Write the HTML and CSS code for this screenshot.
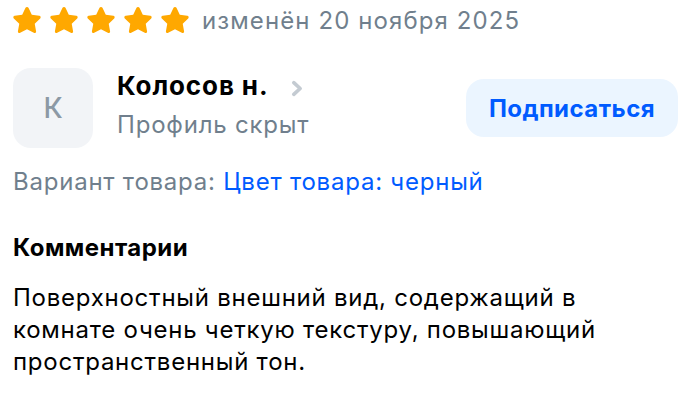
FILE: index.html
```html
<!DOCTYPE html>
<html lang="ru">

<head>
    <meta charset="UTF-8">
    <meta name="viewport" content="width=device-width, initial-scale=1.0">
    <title>Отзыв</title>
    <link rel="stylesheet" href="styles.css">
</head>

<body>
    <div class="review">
        <div class="rating-row">
            <div class="stars">
                <svg class="star" viewBox="0 0 24 24"><path d="M12 2.2c.5 0 .9.3 1.1.7l2.5 5.1 5.6.8c1 .1 1.4 1.3.7 2l-4.1 4 1 5.6c.2 1-.8 1.7-1.7 1.2L12 19l-5.1 2.6c-.9.5-1.9-.3-1.7-1.2l1-5.6-4.1-4c-.7-.7-.3-1.9.7-2l5.6-.8 2.5-5.1c.2-.4.6-.7 1.1-.7z"/></svg>
                <svg class="star" viewBox="0 0 24 24"><path d="M12 2.2c.5 0 .9.3 1.1.7l2.5 5.1 5.6.8c1 .1 1.4 1.3.7 2l-4.1 4 1 5.6c.2 1-.8 1.7-1.7 1.2L12 19l-5.1 2.6c-.9.5-1.9-.3-1.7-1.2l1-5.6-4.1-4c-.7-.7-.3-1.9.7-2l5.6-.8 2.5-5.1c.2-.4.6-.7 1.1-.7z"/></svg>
                <svg class="star" viewBox="0 0 24 24"><path d="M12 2.2c.5 0 .9.3 1.1.7l2.5 5.1 5.6.8c1 .1 1.4 1.3.7 2l-4.1 4 1 5.6c.2 1-.8 1.7-1.7 1.2L12 19l-5.1 2.6c-.9.5-1.9-.3-1.7-1.2l1-5.6-4.1-4c-.7-.7-.3-1.9.7-2l5.6-.8 2.5-5.1c.2-.4.6-.7 1.1-.7z"/></svg>
                <svg class="star" viewBox="0 0 24 24"><path d="M12 2.2c.5 0 .9.3 1.1.7l2.5 5.1 5.6.8c1 .1 1.4 1.3.7 2l-4.1 4 1 5.6c.2 1-.8 1.7-1.7 1.2L12 19l-5.1 2.6c-.9.5-1.9-.3-1.7-1.2l1-5.6-4.1-4c-.7-.7-.3-1.9.7-2l5.6-.8 2.5-5.1c.2-.4.6-.7 1.1-.7z"/></svg>
                <svg class="star" viewBox="0 0 24 24"><path d="M12 2.2c.5 0 .9.3 1.1.7l2.5 5.1 5.6.8c1 .1 1.4 1.3.7 2l-4.1 4 1 5.6c.2 1-.8 1.7-1.7 1.2L12 19l-5.1 2.6c-.9.5-1.9-.3-1.7-1.2l1-5.6-4.1-4c-.7-.7-.3-1.9.7-2l5.6-.8 2.5-5.1c.2-.4.6-.7 1.1-.7z"/></svg>
            </div>
            <span class="date">изменён 20 ноября 2025</span>
        </div>

        <div class="author-row">
            <div class="avatar">К</div>
            <div class="author-info">
                <div class="author-name">
                    Колосов н.
                    <svg class="chevron" viewBox="0 0 12 16"><path d="M2.5 2.5l6 5.5-6 5.5" fill="none" stroke="currentColor" stroke-width="3.4" stroke-linecap="round" stroke-linejoin="round"/></svg>
                </div>
                <div class="author-note">Профиль скрыт</div>
            </div>
            <button class="subscribe">Подписаться</button>
        </div>

        <div class="variant">Вариант товара: <span class="variant-value">Цвет товара: черный</span></div>

        <h3 class="section-title">Комментарии</h3>
        <p class="comment">Поверхностный внешний вид, содержащий в комнате очень четкую текстуру, повышающий пространственный тон.</p>
    </div>
</body>

</html>
```

FILE: styles.css
```css
body {
    margin: 0;
    font-family: Inter, "Noto Sans", sans-serif;
    background-color: #fff;
    color: #001a34;
}

.review {
    padding: 4px 22px 0 13px;
}

.rating-row {
    display: flex;
    align-items: center;
    height: 32px;
}

.stars {
    display: flex;
    gap: 5px;
    margin-left: -2px;
    margin-right: 11px;
}

.star {
    width: 32px;
    height: 32px;
    fill: #ffa800;
}

.date {
    font-size: 24px;
    letter-spacing: 1.1px;
    color: #707f8d;
}

.author-row {
    display: flex;
    align-items: flex-start;
    margin-top: 32px;
}

.avatar {
    width: 80px;
    height: 80px;
    border-radius: 18px;
    background-color: #f2f4f7;
    color: #8c99a5;
    font-size: 28px;
    font-weight: 500;
    display: flex;
    align-items: center;
    justify-content: center;
    flex-shrink: 0;
}

.author-info {
    margin-left: 24px;
    padding-top: 2px;
    flex: 1;
}

.author-name {
    display: flex;
    align-items: center;
    gap: 22px;
    font-size: 26px;
    font-weight: 700;
    letter-spacing: 0.9px;
    color: #000;
    line-height: 32px;
}

.chevron {
    width: 13px;
    height: 17px;
    margin-top: 4px;
    color: #c4cbd2;
}

.author-note {
    margin-top: 7px;
    font-size: 24px;
    letter-spacing: 0.8px;
    line-height: 32px;
    color: #707f8d;
}

.subscribe {
    margin-top: 11px;
    width: 212px;
    height: 58px;
    border: none;
    border-radius: 18px;
    background-color: #ebf5ff;
    color: #005bff;
    font-family: inherit;
    font-size: 24px;
    font-weight: 700;
    letter-spacing: 0.45px;
    cursor: pointer;
}

.variant {
    margin-top: 18px;
    font-size: 24px;
    letter-spacing: 0.77px;
    line-height: 32px;
    color: #707f8d;
}

.variant-value {
    color: #005bff;
}

.section-title {
    margin: 34px 0 0;
    font-size: 24px;
    letter-spacing: 0.45px;
    line-height: 32px;
    font-weight: 700;
    color: #000;
}

.comment {
    margin: 18px 0 0;
    font-size: 24px;
    letter-spacing: 0.75px;
    line-height: 32px;
    color: #000;
}
```
